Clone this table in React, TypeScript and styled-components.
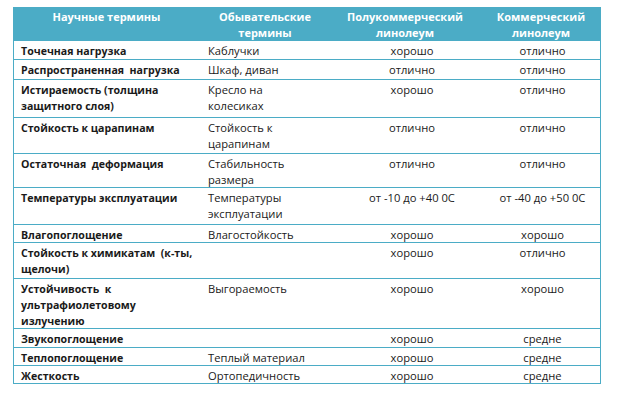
import React from 'react';
import styled, {createGlobalStyle} from 'styled-components';

const GlobalStyle = createGlobalStyle`
  body {
    margin: 0;
    background: #ffffff;
    font-family: "Open Sans", "Liberation Sans", sans-serif;
  }
`;

const TEAL = '#4bacc6';

type Row = {
  science: string;
  common: string;
  semi: string;
  commercial: string;
  height: number;
};

// line breaks are kept as in the source table
const rows: Row[] = [
  {science: 'Точечная нагрузка', common: 'Каблучки', semi: 'хорошо', commercial: 'отлично', height: 19},
  {science: 'Распространенная  нагрузка', common: 'Шкаф, диван', semi: 'отлично', commercial: 'отлично', height: 20},
  {science: 'Истираемость (толщина\nзащитного слоя)', common: 'Кресло на\nколесиках', semi: 'хорошо', commercial: 'отлично', height: 38},
  {science: 'Стойкость к царапинам', common: 'Стойкость к\nцарапинам', semi: 'отлично', commercial: 'отлично', height: 36},
  {science: 'Остаточная  деформация', common: 'Стабильность\nразмера', semi: 'отлично', commercial: 'отлично', height: 34},
  {science: 'Температуры эксплуатации', common: 'Температуры\nэксплуатации', semi: 'от -10 до +40 0С', commercial: 'от -40 до +50 0С', height: 37},
  {science: 'Влагопоглощение', common: 'Влагостойкость', semi: 'хорошо', commercial: 'хорошо', height: 18},
  {science: 'Стойкость к химикатам  (к-ты,\nщелочи)', common: '', semi: 'хорошо', commercial: 'отлично', height: 36},
  {science: 'Устойчивость  к\nультрафиолетовому\nизлучению', common: 'Выгораемость', semi: 'хорошо', commercial: 'хорошо', height: 50},
  {science: 'Звукопоглощение', common: '', semi: 'хорошо', commercial: 'средне', height: 19},
  {science: 'Теплопоглощение', common: 'Теплый материал', semi: 'хорошо', commercial: 'средне', height: 18},
  {science: 'Жесткость', common: 'Ортопедичность', semi: 'хорошо', commercial: 'средне', height: 18},
];

const COLUMNS = '187px 140px 144px 117px';

const Page = styled.div`
  padding: 7px 0 0 13px;
`;

const Table = styled.div`
  width: 588px;
  box-sizing: border-box;
  border-left: 1px solid ${TEAL};
  border-right: 1px solid ${TEAL};
  border-bottom: 1px solid ${TEAL};
`;

const HeadRow = styled.div`
  display: grid;
  grid-template-columns: ${COLUMNS};
  height: 33px;
  margin: 0 -1px;
  background: ${TEAL};
`;

const HeadCell = styled.div<{$shift?: number}>`
  padding-top: 2px;
  padding-right: ${p => p.$shift ?? 0}px;
  color: #ffffff;
  font-weight: 700;
  font-size: 11px;
  line-height: 16px;
  text-align: center;
`;

const BodyRow = styled.div`
  display: grid;
  grid-template-columns: ${COLUMNS};
  margin-left: -1px;
  box-sizing: border-box;
  border-top: 1px solid ${TEAL};
  &:first-of-type {
    border-top: none;
  }
`;

const Cell = styled.div<{$kind: 'science' | 'common' | 'value'}>`
  padding: 2px 0 0 ${p => (p.$kind === 'value' ? 0 : 8)}px;
  color: #1a1a1a;
  font-size: ${p => (p.$kind === 'science' ? 10.6 : 11.2)}px;
  line-height: 16px;
  font-weight: ${p => (p.$kind === 'science' ? 700 : 400)};
  text-align: ${p => (p.$kind === 'value' ? 'center' : 'left')};
  white-space: pre;
`;

export default function App() {
  return (
    <>
      <GlobalStyle />
      <Page>
        <Table>
          <HeadRow>
            <HeadCell>Научные термины</HeadCell>
            <HeadCell $shift={10}>
              Обывательские
              <br />
              термины
            </HeadCell>
            <HeadCell $shift={14}>
              Полукоммерческий
              <br />
              линолеум
            </HeadCell>
            <HeadCell $shift={3}>
              Коммерческий
              <br />
              линолеум
            </HeadCell>
          </HeadRow>
          {rows.map(row => (
            <BodyRow key={row.science} style={{height: row.height}}>
              <Cell $kind="science">{row.science}</Cell>
              <Cell $kind="common">{row.common}</Cell>
              <Cell $kind="value">{row.semi}</Cell>
              <Cell $kind="value">{row.commercial}</Cell>
            </BodyRow>
          ))}
        </Table>
      </Page>
    </>
  );
}
